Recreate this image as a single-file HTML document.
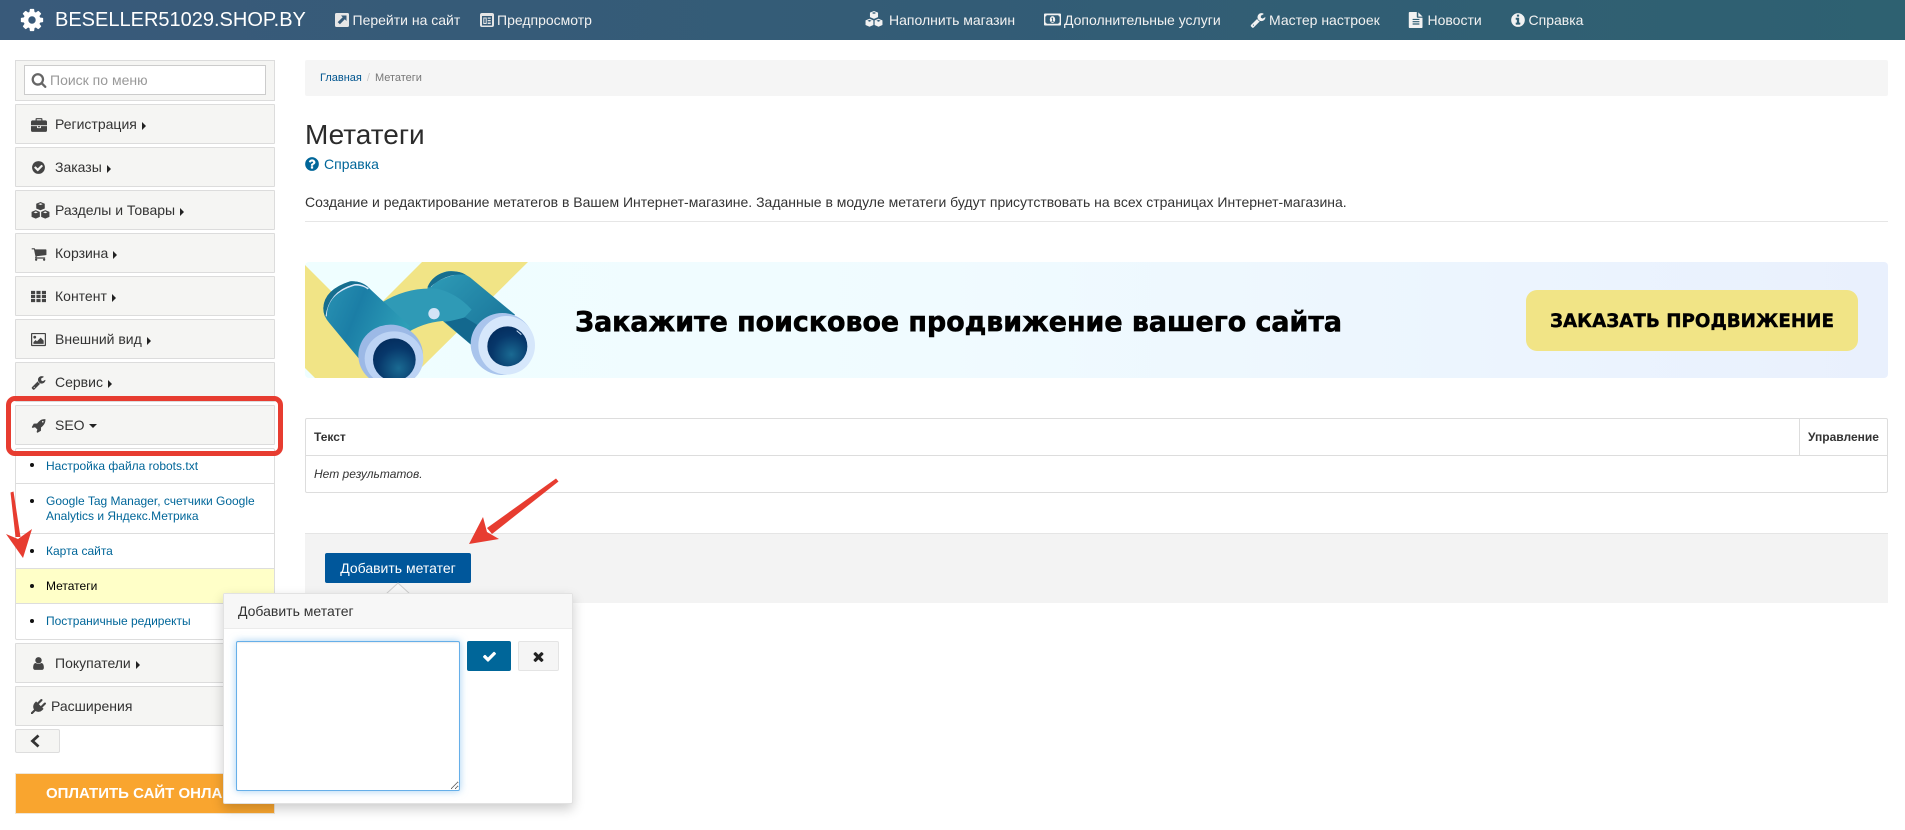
<!DOCTYPE html>
<html lang="ru"><head><meta charset="utf-8"><title>Метатеги</title>
<style>
html,body{margin:0;padding:0;background:#fff;width:1905px;height:830px;overflow:hidden}
body{position:relative;font:14px/20px "Liberation Sans",Arial,sans-serif;color:#333}
*{box-sizing:border-box}
.a{position:absolute}
svg.i{position:absolute;fill:currentColor;display:block}
#nav{left:0;top:0;width:1905px;height:40px;background:linear-gradient(90deg,#395a7a 0%,#335c76 50%,#2e6171 100%);color:#f2f2f2}
#nav span{position:absolute;top:10px;white-space:nowrap}
.m{left:15px;width:260px;height:40px;background:#f5f5f3;border:1px solid #dcdcdc;border-radius:1px}
.m span{position:absolute;left:39px;top:9px;white-space:nowrap;color:#333}
.m svg{left:15px;top:12px;color:#444}
.m b{display:inline-block;margin-left:5px;width:0;height:0;border-left:4px solid #222;border-top:4px solid transparent;border-bottom:4px solid transparent;vertical-align:-0.5px}
.m b.d{margin-left:4px;border-top:4px solid #222;border-left:4px solid transparent;border-right:4px solid transparent;border-bottom:0;vertical-align:2px}
.l{left:16px;width:258px;font-size:12px;line-height:15px;color:#006699;border-bottom:1px solid #ddd}
.l i{position:absolute;left:14px;width:4px;height:4px;border-radius:50%;background:#111}
.l span{position:absolute;left:30px;white-space:nowrap}
</style></head><body>
<svg width="0" height="0" style="position:absolute"><defs>
<symbol id="cog" viewBox="0 0 1792 1792"><path d="M1152 896q0-106-75-181t-181-75-181 75-75 181 75 181 181 75 181-75 75-181zm512-109v222q0 12-8 23t-20 13l-185 28q-19 54-39 91 35 50 107 138 10 12 10 25t-9 23q-27 37-99 108t-94 71q-12 0-26-9l-138-108q-44 23-91 38-16 136-29 186-7 28-36 28h-222q-14 0-24.500-8.500t-11.500-21.500l-28-184q-49-16-90-37l-141 107q-10 9-25 9-14 0-25-11-126-114-165-168-7-10-7-23 0-12 8-23 15-21 51-66.500t54-70.500q-27-50-41-99l-183-27q-13-2-21-12.500t-8-23.500v-222q0-12 8-23t19-13l186-28q14-46 39-92-40-57-107-138-10-12-10-24 0-10 9-23 26-36 98.500-107.500t94.500-71.500q13 0 26 10l138 107q44-23 91-38 16-136 29-186 7-28 36-28h222q14 0 24.500 8.500t11.500 21.500l28 184q49 16 90 37l142-107q9-9 24-9 13 0 25 10 129 119 165 170 7 8 7 22 0 12-8 23-15 21-51 66.500t-54 70.500q26 50 41 98l183 28q13 2 21 12.500t8 23.500z"/></symbol>
<symbol id="check" viewBox="0 0 1792 1792"><path d="M1671 566q0 40-28 68l-724 724-136 136q-28 28-68 28t-68-28l-136-136-362-362q-28-28-28-68t28-68l136-136q28-28 68-28t68 28l294 295 656-657q28-28 68-28t68 28l136 136q28 28 28 68z"/></symbol>
<symbol id="times" viewBox="0 0 1792 1792"><path d="M1490 1322q0 40-28 68l-136 136q-28 28-68 28t-68-28l-294-294-294 294q-28 28-68 28t-68-28l-136-136q-28-28-28-68t28-68l294-294-294-294q-28-28-28-68t28-68l136-136q28-28 68-28t68 28l294 294 294-294q28-28 68-28t68 28l136 136q28 28 28 68t-28 68l-294 294 294 294q28 28 28 68z"/></symbol>
<symbol id="search" viewBox="0 0 1792 1792"><path d="M1216 832q0-185-131.500-316.500t-316.500-131.500-316.500 131.500-131.500 316.500 131.500 316.500 316.500 131.500 316.500-131.500 131.500-316.500zm512 832q0 52-38 90t-90 38q-54 0-90-38l-343-342q-179 124-399 124-143 0-273.500-55.500t-225-150-150-225-55.500-273.500 55.500-273.500 150-225 225-150 273.500-55.500 273.500 55.500 225 150 150 225 55.500 273.500q0 220-124 399l343 343q37 37 37 90z"/></symbol>
<symbol id="q" viewBox="0 0 1792 1792"><path d="M1024 1376v-192q0-14-9-23t-23-9h-192q-14 0-23 9t-9 23v192q0 14 9 23t23 9h192q14 0 23-9t9-23zm256-672q0-88-55.500-163t-138.500-116-170-41q-243 0-371 213-15 24 8 42l132 100q7 6 19 6 16 0 25-12 53-68 86-92 34-24 86-24 48 0 85.500 26t37.500 59q0 38-20 61t-68 45q-63 28-115.500 86.500t-52.500 125.500v36q0 14 9 23t23 9h192q14 0 23-9t9-23q0-19 21.500-49.500t54.500-49.500q32-18 49-28.500t46-35 44.500-48 28-60.500 12.500-81zm384 192q0 209-103 385.500t-279.500 279.500-385.500 103-385.500-103-279.500-279.500-103-385.500 103-385.500 279.500-279.500 385.500-103 385.500 103 279.500 279.500 103 385.500z"/></symbol>
<symbol id="okc" viewBox="0 0 1792 1792"><path d="M1412 734q0-28-18-46l-91-90q-19-19-45-19t-45 19l-408 407-226-226q-19-19-45-19t-45 19l-91 90q-18 18-18 46 0 27 18 45l362 362q19 19 45 19 27 0 46-19l543-543q18-18 18-45zm252 162q0 209-103 385.500t-279.500 279.500-385.500 103-385.500-103-279.500-279.500-103-385.500 103-385.500 279.500-279.500 385.500-103 385.500 103 279.500 279.500 103 385.500z"/></symbol>
<symbol id="info" viewBox="0 0 1792 1792"><path d="M1152 1376v-160q0-14-9-23t-23-9h-96v-512q0-14-9-23t-23-9h-320q-14 0-23 9t-9 23v160q0 14 9 23t23 9h96v320h-96q-14 0-23 9t-9 23v160q0 14 9 23t23 9h448q14 0 23-9t9-23zm-128-896v-160q0-14-9-23t-23-9h-192q-14 0-23 9t-9 23v160q0 14 9 23t23 9h192q14 0 23-9t9-23zm640 416q0 209-103 385.500t-279.500 279.500-385.500 103-385.500-103-279.500-279.500-103-385.500 103-385.500 279.500-279.500 385.500-103 385.500 103 279.500 279.500 103 385.500z"/></symbol>
<symbol id="wrench" viewBox="0 0 1792 1792"><path d="M448 1472q0-26-19-45t-45-19-45 19-19 45 19 45 45 19 45-19 19-45zm644-420l-682 682q-37 37-90 37-52 0-91-37l-106-108q-38-36-38-90 0-53 38-91l681-681q39 98 114.500 173.500t173.500 114.500zm634-435q0 39-23 106-47 134-164.500 217.500t-258.500 83.500q-185 0-316.500-131.500t-131.500-316.500 131.500-316.500 316.500-131.500q58 0 121.500 16.500t107.500 46.500q16 11 16 28t-16 28l-293 169v224l193 107q5-3 79-48.500t135.500-81 70.500-35.500q15 0 23.500 10t8.500 25z"/></symbol>
<symbol id="cart" viewBox="0 0 1792 1792"><path d="M704 1536q0 52-38 90t-90 38-90-38-38-90 38-90 90-38 90 38 38 90zm896 0q0 52-38 90t-90 38-90-38-38-90 38-90 90-38 90 38 38 90zm128-1088v512q0 24-16.500 42.500t-40.500 21.500l-1044 122q13 60 13 70 0 16-24 64h920q26 0 45 19t19 45-19 45-45 19h-1024q-26 0-45-19t-19-45q0-11 8-31.500t16-36 21.500-40 15.500-29.500l-177-823h-204q-26 0-45-19t-19-45 19-45 45-19h256q16 0 28.500 6.500t19.500 15.500 13 24.500 8 26 5.500 29.500 4.500 26h1201q26 0 45 19t19 45z"/></symbol>
<symbol id="user" viewBox="0 0 1792 1792"><path d="M1536 1399q0 109-62.500 187t-150.500 78h-854q-88 0-150.500-78t-62.500-187q0-85 8.500-160.500t31.500-152 58.500-131 94-89 134.500-34.500q131 128 313 128t313-128q76 0 134.500 34.500t94 89 58.500 131 31.500 152 8.500 160.500zm-256-887q0 159-112.500 271.500t-271.500 112.500-271.500-112.500-112.500-271.500 112.500-271.500 271.500-112.500 271.500 112.500 112.500 271.500z"/></symbol>
<symbol id="rocket" viewBox="0 0 1792 1792"><path d="M1504 448q0-40-28-68t-68-28-68 28-28 68 28 68 68 28 68-28 28-68zm224-288q0 249-75.500 430.500t-253.500 360.500q-81 80-195 176l-20 379q-2 16-16 26l-384 224q-7 4-16 4-12 0-23-9l-64-64q-13-14-8-32l85-276-281-281-276 85q-3 1-9 1-14 0-23-9l-64-64q-17-19-5-39l224-384q10-14 26-16l379-20q96-114 176-195 188-187 358-258t431-71q14 0 24 9.500t10 22.500z"/></symbol>
<symbol id="plug" viewBox="0 0 1792 1792"><path d="M1755 453q37 38 37 90.500t-37 90.500l-401 400 150 150-160 160q-163 163-389.500 186.500t-411.500-100.500l-362 362h-181v-181l362-362q-124-185-100.500-411.500t186.500-389.500l160-160 150 150 400-401q38-37 91-37t90 37 37 90.500-37 90.500l-400 401 234 234 401-400q38-37 91-37t90 37z"/></symbol>
<symbol id="file" viewBox="0 0 1792 1792"><path d="M1596 476q14 14 28 36h-472v-472q22 14 36 28zm-476 164h504v1056q0 40-28 68t-68 28h-1344q-40 0-68-28t-28-68v-1600q0-40 28-68t68-28h800v544q0 40 28 68t68 28zm160 736v-64q0-14-9-23t-23-9h-704q-14 0-23 9t-9 23v64q0 14 9 23t23 9h704q14 0 23-9t9-23zm0-256v-64q0-14-9-23t-23-9h-704q-14 0-23 9t-9 23v64q0 14 9 23t23 9h704q14 0 23-9t9-23zm0-256v-64q0-14-9-23t-23-9h-704q-14 0-23 9t-9 23v64q0 14 9 23t23 9h704q14 0 23-9t9-23z"/></symbol>
<symbol id="brief" viewBox="0 0 1792 1792"><path d="M640 384h512v-128h-512v128zm1152 640v480q0 66-47 113t-113 47h-1472q-66 0-113-47t-47-113v-480h672v160q0 26 19 45t45 19h320q26 0 45-19t19-45v-160h672zm-768 0v128h-256v-128h256zm768-480v384h-1792v-384q0-66 47-113t113-47h352v-160q0-40 28-68t68-28h576q40 0 68 28t28 68v160h352q66 0 113 47t47 113z"/></symbol>
<symbol id="th" viewBox="0 0 16 16"><path d="M0 2h4.400v3.400H0zM5.800 2h4.400v3.400H5.800zM11.600 2H16v3.400h-4.400zM0 6.300h4.400v3.400H0zM5.800 6.300h4.400v3.400H5.800zM11.600 6.300H16v3.400h-4.400zM0 10.600h4.400V14H0zM5.800 10.600h4.400V14H5.800zM11.600 10.600H16V14h-4.400z"/></symbol>
<symbol id="pic" viewBox="0 0 16 16"><path fill-rule="evenodd" d="M1 1h14a1 1 0 0 1 1 1v12a1 1 0 0 1-1 1H1a1 1 0 0 1-1-1V2a1 1 0 0 1 1-1zm.3 1.300v11.400h13.400V2.300zM4 4a1.500 1.500 0 1 1 0 3 1.500 1.500 0 0 1 0-3zM2.600 12.600v-1.800l2.300-2.300 1.500 1.500 3.900-4 3.200 3.200v3.400z"/></symbol>
<symbol id="cubes" viewBox="0 0 20 20"><path fill-rule="evenodd" d="M10 0l4.500 1.800v5l-4.500 1.900-4.500-1.900v-5zM10 1.300L7.600 2.200 10 3.200l2.400-1zM5 8.600l4.300 1.800v5.200L5 17.500.6 15.600v-5.200zM5 9.900l-2.300 1L5 11.900l2.300-1zM15 8.600l4.400 1.800v5.200L15 17.500l-4.300-1.900v-5.200zM15 9.900l-2.300 1 2.300 1 2.300-1z"/></symbol>
<symbol id="money" viewBox="0 0 20 14"><path fill-rule="evenodd" d="M1 0h18a1 1 0 0 1 1 1v12a1 1 0 0 1-1 1H1a1 1 0 0 1-1-1V1a1 1 0 0 1 1-1zm2 2Q3 3.500 1.600 3.500v7Q3 10.500 3 12h14q0-1.500 1.400-1.500v-7Q17 3.500 17 2zM10 3a3.200 4 0 1 1 0 8 3.200 4 0 0 1 0-8zM8.800 5v.9h.8v3h-.8v.9h2.600v-.9h-.8V5z"/></symbol>
<symbol id="ext" viewBox="0 0 16 16"><path fill-rule="evenodd" d="M2.500 1h11A1.500 1.500 0 0 1 15 2.500v11a1.500 1.500 0 0 1-1.500 1.500h-11A1.500 1.500 0 0 1 1 13.500v-11A1.500 1.500 0 0 1 2.500 1zM7 3.500l1.700 1.700-5 4.900 2.200 2.200 4.900-5 1.700 1.700V3.500z"/></symbol>
<symbol id="prev" viewBox="0 0 16 16"><path fill-rule="evenodd" d="M3 1h10a2 2 0 0 1 2 2v10a2 2 0 0 1-2 2H3a2 2 0 0 1-2-2V3a2 2 0 0 1 2-2zm0 3v9.500h10V4zM4.300 5.500h3.400V12H4.300zM5.300 6.500V11h1.400V6.500zM8.700 5.500h3v1.300h-3zM8.700 8h3v1.300h-3zM8.700 10.500h3V12h-3z"/></symbol>
</defs></svg>

<div id="nav" class="a">
<svg class="i" style="left:19px;top:7px;width:26px;height:26px;color:#fff"><use href="#cog"/></svg>
<span style="left:55px;top:8px;font-size:20px;line-height:24px;color:#fff">BESELLER51029.SHOP.BY</span>
<svg class="i" style="left:334px;top:12px;width:16px;height:16px;color:#e6e6e6"><use href="#ext"/></svg><span style="left:352.500px">Перейти на сайт</span>
<svg class="i" style="left:479px;top:12px;width:16px;height:16px;color:#e6e6e6"><use href="#prev"/></svg><span style="left:497px">Предпросмотр</span>
<svg class="i" style="left:865px;top:11px;width:18px;height:18px"><use href="#cubes"/></svg><span style="left:889px">Наполнить магазин</span>
<svg class="i" style="left:1044px;top:13px;width:17px;height:13px"><use href="#money"/></svg><span style="left:1064px">Дополнительные услуги</span>
<svg class="i" style="left:1250px;top:12px;width:16px;height:16px"><use href="#wrench"/></svg><span style="left:1269px">Мастер настроек</span>
<svg class="i" style="left:1408px;top:12px;width:16px;height:16px"><use href="#file"/></svg><span style="left:1427.500px">Новости</span>
<svg class="i" style="left:1510px;top:12px;width:16px;height:16px"><use href="#info"/></svg><span style="left:1528.500px">Справка</span>
</div>

<!-- sidebar -->
<div class="a" style="left:15px;top:60px;width:260px;height:41px;background:#f5f5f3;border:1px solid #dcdcdc"></div>
<div class="a" style="left:24px;top:65px;width:242px;height:30px;background:#fff;border:1px solid #ccc"></div>
<svg class="i" style="left:31px;top:72px;width:16px;height:16px;color:#666"><use href="#search"/></svg>
<div class="a" style="left:50px;top:70px;color:#999;white-space:nowrap">Поиск по меню</div>

<div class="a m" style="top:104px"><svg class="i" style="width:16px;height:16px"><use href="#brief"/></svg><span>Регистрация<b></b></span></div>
<div class="a m" style="top:147px"><svg class="i" style="width:15px;height:15px"><use href="#okc"/></svg><span>Заказы<b></b></span></div>
<div class="a m" style="top:190px"><svg class="i" style="width:19px;height:19px;top:11px"><use href="#cubes"/></svg><span>Разделы и Товары<b></b></span></div>
<div class="a m" style="top:233px"><svg class="i" style="width:16px;height:16px"><use href="#cart"/></svg><span>Корзина<b></b></span></div>
<div class="a m" style="top:276px"><svg class="i" style="width:15px;height:15px;top:12px"><use href="#th"/></svg><span>Контент<b></b></span></div>
<div class="a m" style="top:319px"><svg class="i" style="width:15px;height:15px"><use href="#pic"/></svg><span>Внешний вид<b></b></span></div>
<div class="a m" style="top:362px"><svg class="i" style="width:15px;height:15px"><use href="#wrench"/></svg><span>Сервис<b></b></span></div>
<div class="a m" style="top:405px"><svg class="i" style="width:15px;height:15px"><use href="#rocket"/></svg><span>SEO<b class="d"></b></span></div>

<div class="a" style="left:15px;top:448px;width:260px;height:192px;background:#fff;border:1px solid #ddd;border-radius:2px"></div>
<div class="a l" style="top:449px;height:35px"><i style="top:14px"></i><span style="top:9px;margin-top:1px">Настройка файла robots.txt</span></div>
<div class="a l" style="top:484px;height:50px"><i style="top:15px"></i><span style="top:10px">Google Tag Manager, счетчики Google<br>Analytics и Яндекс.Метрика</span></div>
<div class="a l" style="top:534px;height:35px"><i style="top:15px"></i><span style="top:10px">Карта сайта</span></div>
<div class="a l" style="top:569px;height:35px;background:#ffffc8;color:#000"><i style="top:15px"></i><span style="top:10px">Метатеги</span></div>
<div class="a l" style="top:604px;height:35px;border:0"><i style="top:15px"></i><span style="top:10px">Постраничные редиректы</span></div>

<div class="a m" style="top:643px"><svg class="i" style="width:15px;height:15px"><use href="#user"/></svg><span>Покупатели<b></b></span></div>
<div class="a m" style="top:686px"><svg class="i" style="width:15px;height:15px"><use href="#plug"/></svg><span style="left:35px">Расширения</span></div>
<div class="a" style="left:15px;top:729px;width:45px;height:24px;background:#f5f5f3;border:1px solid #ddd;border-radius:2px"></div>
<svg class="a" style="left:28px;top:733px" width="14" height="16"><path d="M10.500 2.500L4.500 8l6 5.500" fill="none" stroke="#333" stroke-width="2.800"/></svg>
<div class="a" style="left:15px;top:773px;width:260px;height:41px;background:#f9a52f;border:1px solid #efe6d8;color:#fff;font-weight:bold;font-size:15px;line-height:40px;padding-left:30px;white-space:nowrap;overflow:hidden">ОПЛАТИТЬ САЙТ ОНЛАЙН</div>

<!-- main -->
<div class="a" style="left:305px;top:60px;width:1583px;height:36px;background:#f5f5f5;border-radius:2px"></div>
<div class="a" style="left:320px;top:68px;font-size:11px;white-space:nowrap;color:#777"><span style="color:#00558f">Главная</span><span style="color:#ccc;margin:0 5px">/</span>Метатеги</div>
<div class="a" style="left:305px;top:119px;font-size:28px;line-height:32px;color:#2b2b2b;white-space:nowrap">Метатеги</div>
<svg class="i" style="left:304px;top:156px;width:16px;height:16px;color:#006699"><use href="#q"/></svg>
<div class="a" style="left:324px;top:154px;color:#006699">Справка</div>
<div class="a" style="left:305px;top:192px;white-space:nowrap;color:#333">Создание и редактирование метатегов в Вашем Интернет-магазине. Заданные в модуле метатеги будут присутствовать на всех страницах Интернет-магазина.</div>
<div class="a" style="left:305px;top:221px;width:1583px;height:1px;background:#e6e6e6"></div>

<!-- banner -->
<div class="a" style="left:305px;top:262px;width:1583px;height:116px;border-radius:4px;overflow:hidden;background:linear-gradient(90deg,#effeff 0%,#f0fbff 40%,#e9f0fd 100%)">
<svg class="a" style="left:0;top:0" width="1583" height="116" viewBox="0 0 1583 116">
<polygon points="0,3 70,73 70,116 10,116 0,106" fill="#f1e486"/>
<polygon points="117,0 223,0 118,104 106,116 65,116 65,52" fill="#f1e486"/>
<text x="270" y="69" font-family="'DejaVu Sans',sans-serif" font-weight="bold" font-size="27.500" fill="#000" stroke="#000" stroke-width=".6" textLength="767" lengthAdjust="spacingAndGlyphs">Закажите поисковое продвижение вашего сайта</text>
</svg>
<div class="a" style="left:1221px;top:28px;width:332px;height:61px;border-radius:11px;background:#f1e486"></div>
<svg class="a" style="left:1221px;top:28px" width="332" height="61"><text x="24" y="37" font-family="'DejaVu Sans',sans-serif" font-weight="bold" font-size="19" fill="#000" stroke="#000" stroke-width=".4" textLength="284" lengthAdjust="spacingAndGlyphs">ЗАКАЗАТЬ ПРОДВИЖЕНИЕ</text></svg>
<svg class="a" style="left:-5px;top:-4px" width="250" height="124" viewBox="0 0 750 372">
<defs>
<linearGradient id="b1" x1="0" y1="0" x2="1" y2="0.400"><stop offset="0" stop-color="#2a94b4"/><stop offset=".45" stop-color="#1b7ea6"/><stop offset="1" stop-color="#2e9fb8"/></linearGradient>
<linearGradient id="b2" x1="0" y1="0" x2="1" y2="1"><stop offset="0" stop-color="#2f9db8"/><stop offset="1" stop-color="#146a92"/></linearGradient>
<radialGradient id="h1" cx=".6" cy=".7" r=".8"><stop offset="0" stop-color="#1a6a92"/><stop offset=".6" stop-color="#07376a"/><stop offset="1" stop-color="#032a5a"/></radialGradient>
<clipPath id="c1"><rect x="0" y="12" width="750" height="348"/></clipPath>
</defs>
<g clip-path="url(#c1)">
<path d="M382 92Q395 52 440 40Q480 36 510 58L645 170L560 300L430 190Z" fill="url(#b2)"/>
<path d="M392 85Q410 62 465 48" fill="none" stroke="#d4e4f6" stroke-width="5"/>
<path d="M382 88Q398 48 445 40Q480 38 497 50Q440 44 390 88Z" fill="#176e8e"/>
<path d="M243 135Q320 86 410 92Q470 105 515 155Q500 172 480 192Q400 178 325 222L250 155Z" fill="#2f9ab6"/>
<path d="M435 192Q470 185 495 178L555 215 520 265Z" fill="#13688e"/>
<path d="M70 150Q72 95 150 70Q190 68 212 95L330 205L200 330L88 195Q70 175 70 150Z" fill="url(#b1)"/>
<path d="M78 175Q78 105 165 80Q190 80 205 92" fill="none" stroke="#d8e6f8" stroke-width="5"/>
<path d="M70 150Q72 95 150 70Q185 68 205 90Q180 74 160 79Q85 100 76 178Q70 165 70 150Z" fill="#176e8e"/>
<circle cx="402" cy="167" r="17" fill="#d3e3f6"/>
<ellipse cx="272" cy="292" rx="97" ry="92" fill="#9cb9e6"/>
<ellipse cx="282" cy="302" rx="88" ry="82" fill="#bcd3f4"/>
<circle cx="283" cy="305" r="64" fill="url(#h1)"/>
<ellipse cx="607" cy="258" rx="95" ry="93" fill="#a9c4ec"/>
<ellipse cx="620" cy="262" rx="85" ry="88" fill="#d6e7fb"/>
<circle cx="622" cy="265" r="60" fill="url(#h1)"/>
<path d="M650 218l14 12" stroke="#d6e7fb" stroke-width="3"/>
</g></svg>
</div>

<!-- table -->
<div class="a" style="left:305px;top:418px;width:1583px;height:75px;border:1px solid #ddd;border-radius:2px;background:#fff"></div>
<div class="a" style="left:305px;top:455px;width:1583px;height:1px;background:#ddd"></div>
<div class="a" style="left:1799px;top:418px;width:1px;height:37px;background:#ddd"></div>
<div class="a" style="left:314px;top:427px;font-size:12px;font-weight:bold;color:#333">Текст</div>
<div class="a" style="left:1808px;top:427px;font-size:12px;font-weight:bold;color:#333">Управление</div>
<div class="a" style="left:314px;top:464px;font-size:12px;font-style:italic;color:#333">Нет результатов.</div>

<!-- footer -->
<div class="a" style="left:305px;top:533px;width:1583px;height:70px;background:#f3f3f3;border-top:1px solid #e5e5e5"></div>
<div class="a" style="left:325px;top:553px;width:146px;height:30px;background:#00579b;border-radius:2px;color:#fff;text-align:center;line-height:30px">Добавить метатег</div>

<!-- popover -->
<svg class="a" style="left:385px;top:582px" width="26" height="12"><path d="M1 12L13 1l12 11z" fill="#f7f7f7" stroke="#ccc"/></svg>
<div class="a" style="left:223px;top:593px;width:350px;height:211px;background:#fff;border:1px solid #e2e2e2;border-radius:2px;box-shadow:0 5px 12px rgba(0,0,0,.2)"></div>
<div class="a" style="left:224px;top:594px;width:348px;height:35px;background:#f7f7f7;border-bottom:1px solid #ebebeb"></div>
<div class="a" style="left:238px;top:601px;color:#333">Добавить метатег</div>
<textarea class="a" style="left:236px;top:641px;width:224px;height:150px;margin:0;background:#fff;border:1px solid #66afe9;border-radius:2px;box-shadow:inset 0 1px 1px rgba(0,0,0,.075),0 0 8px rgba(102,175,233,.6);outline:0"></textarea>
<div class="a" style="left:467px;top:641px;width:44px;height:30px;background:#006699;border-radius:2px"></div>
<svg class="i" style="left:482px;top:649px;width:15px;height:15px;color:#fff"><use href="#check"/></svg>
<div class="a" style="left:518px;top:641px;width:41px;height:30px;background:#f5f5f5;border:1px solid #e4e4e4;border-radius:2px"></div>
<svg class="i" style="left:531px;top:649px;width:15px;height:15px;color:#222"><use href="#times"/></svg>

<!-- annotations -->
<div class="a" style="left:6px;top:396px;width:277px;height:60px;border:5px solid #e73c30;border-radius:9px"></div>
<svg class="a" style="left:0;top:470px" width="600" height="100" viewBox="0 470 600 100">
<polygon points="10.500,492.500 13.500,491.500 20.500,537 15.500,537" fill="#e73c30"/>
<polygon points="6,534 18,539 32,529 23,558" fill="#e73c30"/>
<polygon points="556,478.500 558.500,481.500 492,534 487,528" fill="#e73c30"/>
<polygon points="483,517 487,532 499,539 469,544" fill="#e73c30"/>
</svg>
</body></html>
